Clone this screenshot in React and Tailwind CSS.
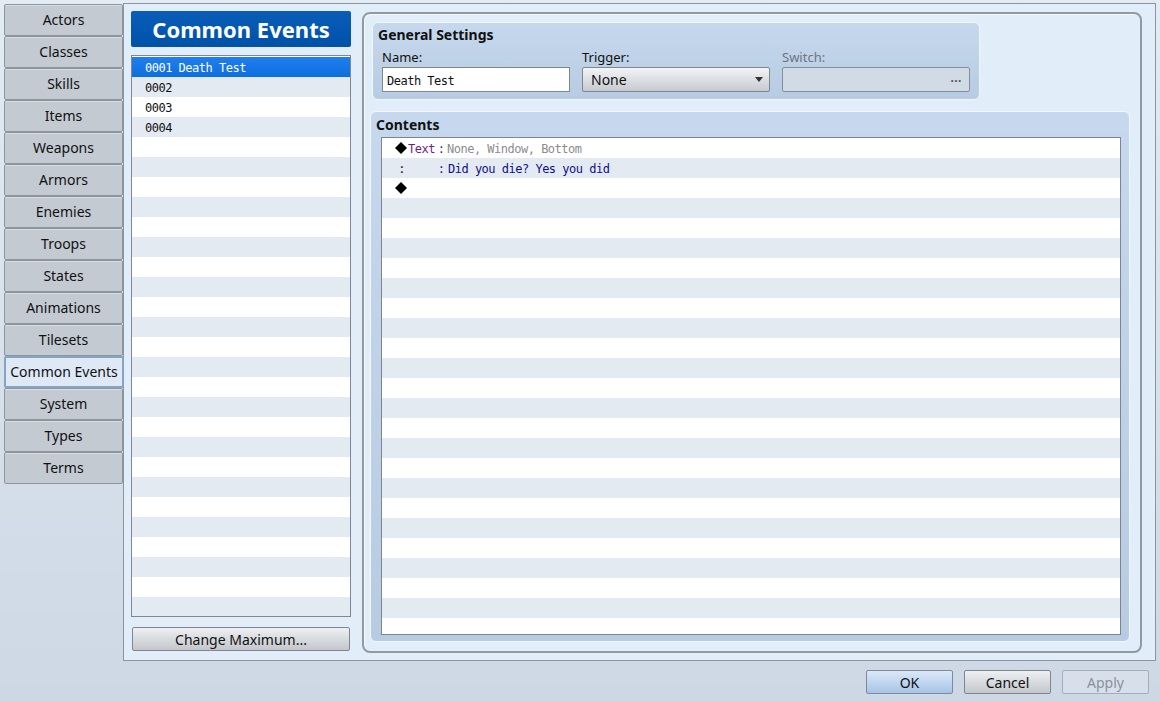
import React from 'react';

const tabs = [
  'Actors', 'Classes', 'Skills', 'Items', 'Weapons', 'Armors', 'Enemies', 'Troops',
  'States', 'Animations', 'Tilesets', 'Common Events', 'System', 'Types', 'Terms',
];

const events = ['0001 Death Test', '0002', '0003', '0004'];

const mono = "font-['DejaVu_Sans_Mono','Noto_Sans_CJK_JP',monospace] text-[12px] tracking-[-0.5px]";

const Diamond = () => (
  <svg width="13" height="12" viewBox="0 0 13 12" className="shrink-0">
    <polygon points="6,0 12,6 6,12 0,6" fill="#000" />
  </svg>
);

const Tab = ({ label, active }) => (
  <div
    className={`h-[32px] flex items-center justify-center text-[14px] rounded-[2px] pb-[1px] ${
      active
        ? 'bg-[#dfe9f6] border-2 border-[#86a2c4] relative z-10 mr-[-1px]'
        : 'bg-[#c3cad2] border border-[#8d959e] shadow-[inset_0_1px_0_#d9dee4]'
    }`}
  >
    {label}
  </div>
);

const Button = ({ children, variant = 'gray', className = '' }) => {
  const styles = {
    gray: 'bg-gradient-to-b from-[#eef0f2] to-[#c3c7cc] border-[#7f868e] text-[#111]',
    blue: 'bg-gradient-to-b from-[#dbe9f9] to-[#a7c4e6] border-[#7c8a99] text-[#111]',
    disabled: 'bg-[#d7e0ea] border-[#a3adb8] text-[#8a929c]',
  };
  return (
    <div
      className={`h-[24px] flex items-center justify-center text-[14px] rounded-[2px] border ${styles[variant]} ${className}`}
    >
      {children}
    </div>
  );
};

const GroupBox = ({ title, className = '', children }) => (
  <div
    className={`rounded-[6px] border border-[#f2f7fc] bg-gradient-to-b from-[#c5d8ed] to-[#b7cbe2] ${className}`}
  >
    <div className="pl-[5px] text-[14px] font-bold leading-[20px]">{title}</div>
    {children}
  </div>
);

export default function App() {
  const listRows = Array.from({ length: 28 });
  const contentRows = Array.from({ length: 25 });

  return (
    <div className="w-[1160px] h-[702px] overflow-hidden flex flex-col bg-gradient-to-b from-[#e3ebf5] to-[#cdd8e4] font-['Noto_Sans',sans-serif] text-[#111]">
      <div className="flex pt-[3px] pl-[4px]">
        {/* Side tabs */}
        <div className="w-[119px] pt-[1px] flex flex-col">
          {tabs.map((t) => (
            <Tab key={t} label={t} active={t === 'Common Events'} />
          ))}
        </div>

        {/* Main panel */}
        <div className="w-[1033px] h-[658px] border border-[#8c949c] bg-[#e2edfa] flex pl-[7px] pt-[7px]">
          {/* Event list column */}
          <div className="w-[220px] flex flex-col">
            <div className="h-[36px] rounded-[2px] bg-gradient-to-b from-[#0a5db8] to-[#0052a8] text-white text-[22px] font-bold flex items-center justify-center">
              Common Events
            </div>
            <div className={`mt-[8px] h-[562px] border border-[#7f878f] bg-white pt-[1px] overflow-hidden ${mono}`}>
              {listRows.map((_, i) => (
                <div
                  key={i}
                  className={`h-[20px] pl-[13px] pt-[2px] flex items-center ${
                    i === 0
                      ? 'bg-gradient-to-b from-[#1f7fee] to-[#0c6ede] text-white'
                      : i % 2 === 1
                      ? 'bg-[#e4eaf2]'
                      : 'bg-white'
                  }`}
                >
                  {events[i] || ''}
                </div>
              ))}
            </div>
            <Button className="mt-[10px] ml-[1px] w-[218px]">Change Maximum...</Button>
          </div>

          {/* Right group */}
          <div className="ml-[11px] mt-[1px] w-[780px] h-[641px] rounded-[8px] border-2 border-[#9199a3] shadow-[inset_1px_1px_0_#f4f8fc] px-[6px] pt-[8px]">
            <GroupBox title="General Settings" className="ml-[2px] w-[608px] h-[78px] pt-[2px]">
              <div className="flex gap-[12px] pl-[9px] mt-[2px]">
                <div className="w-[188px]">
                  <div className="text-[13px] leading-[18px] pt-[1px]">Name:</div>
                  <div className={`mt-[1px] h-[25px] border border-[#7f868e] bg-white flex items-center pl-[4px] pt-[2px] ${mono}`}>
                    Death Test
                  </div>
                </div>
                <div className="w-[188px]">
                  <div className="text-[13px] leading-[18px] pt-[1px]">Trigger:</div>
                  <div className="mt-[1px] h-[25px] border border-[#80868e] rounded-[2px] bg-gradient-to-b from-[#f3f4f6] to-[#c6cad0] flex items-center justify-between pl-[8px] pr-[6px] text-[14px]">
                    <span>None</span>
                    <svg width="8" height="5" viewBox="0 0 8 5">
                      <polygon points="0,0 8,0 4,5" fill="#333" />
                    </svg>
                  </div>
                </div>
                <div className="w-[188px]">
                  <div className="text-[13px] leading-[18px] pt-[1px] text-[#6c747d]">Switch:</div>
                  <div className="mt-[1px] h-[25px] border border-[#858d96] rounded-[2px] bg-[#d0dbe6] flex items-center justify-end pr-[7px] text-[12px] font-bold text-[#555] tracking-[0.5px] pb-[3px]">
                    ...
                  </div>
                </div>
              </div>
            </GroupBox>

            <GroupBox title="Contents" className="mt-[11px] w-[760px] h-[531px] pt-[3px]">
              <div className={`ml-[10px] mt-[2px] w-[740px] h-[498px] border border-[#7d858e] bg-white overflow-hidden ${mono}`}>
                {contentRows.map((_, i) => (
                  <div
                    key={i}
                    className={`h-[20px] flex items-center pl-[13px] pt-[2px] ${i % 2 === 1 ? 'bg-[#e4eaf2]' : 'bg-white'}`}
                  >
                    {i === 0 && (
                      <>
                        <span className="w-[13px] flex mb-[2px]"><Diamond /></span>
                        <span className="w-[28px] text-[#6b1f8a]">Text</span>
                        <span className="w-[10px] text-center text-[#3b2a8c]">:</span>
                        <span className="text-[#8c8c8c] ml-[1px]">None, Window, Bottom</span>
                      </>
                    )}
                    {i === 1 && (
                      <>
                        <span className="w-[13px] text-center">:</span>
                        <span className="w-[28px]" />
                        <span className="w-[10px] text-center text-[#1a1a8c]">:</span>
                        <span className="text-[#10108a] ml-[2px]">Did you die? Yes you did</span>
                      </>
                    )}
                    {i === 2 && (
                      <span className="w-[13px] flex mb-[2px]"><Diamond /></span>
                    )}
                  </div>
                ))}
              </div>
            </GroupBox>
          </div>
        </div>
      </div>

      {/* Dialog buttons */}
      <div className="flex justify-end gap-[11px] pr-[11px] mt-[9px]">
        <Button variant="blue" className="w-[87px]">OK</Button>
        <Button className="w-[87px]">Cancel</Button>
        <Button variant="disabled" className="w-[87px]">Apply</Button>
      </div>
    </div>
  );
}
